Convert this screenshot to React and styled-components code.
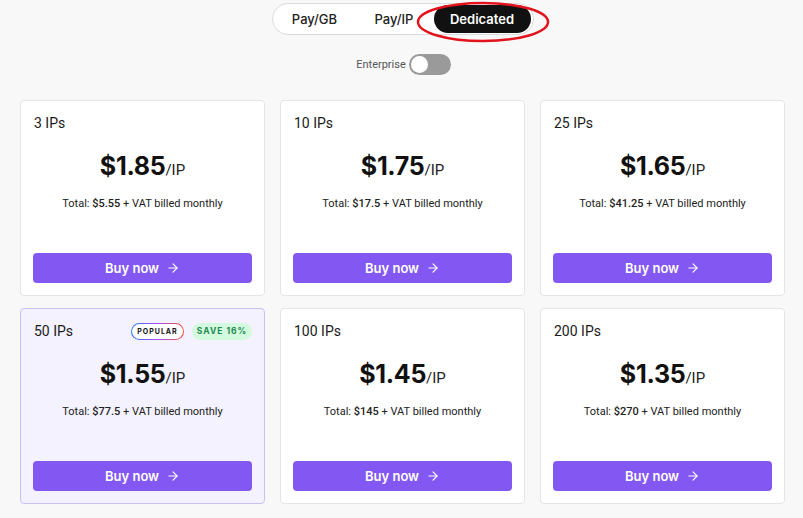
import React from 'react';
import styled, { createGlobalStyle } from 'styled-components';
import { ArrowRight } from 'lucide-react';

const GlobalStyle = createGlobalStyle`
	body {
		margin: 0;
		background: #f8f8f8;
		font-family: Roboto, 'Liberation Sans', sans-serif;
		color: #1a1a1a;
	}
`;

const plans = [
	{ ips: 3, price: '1.85', total: '5.55' },
	{ ips: 10, price: '1.75', total: '17.5' },
	{ ips: 25, price: '1.65', total: '41.25' },
	{ ips: 50, price: '1.55', total: '77.5', popular: true, save: 16 },
	{ ips: 100, price: '1.45', total: '145' },
	{ ips: 200, price: '1.35', total: '270' },
];

const Page = styled.div`
	display: flex;
	flex-direction: column;
	align-items: center;
	padding: 3px 18px 16px 20px;
`;

const TabsWrap = styled.div`
	position: relative;
`;

const Tabs = styled.div`
	display: flex;
	padding: 1px 2px;
	background: #fff;
	border: 1px solid #dcdcdc;
	border-radius: 17px;
`;

const Tab = styled.button`
	width: ${(p) => p.$w}px;
	height: 28px;
	border: 0;
	border-radius: 14px;
	background: ${(p) => (p.$active ? '#111' : 'transparent')};
	color: ${(p) => (p.$active ? '#fff' : '#222')};
	font-family: Inter, 'Liberation Sans', sans-serif;
	font-size: 13px;
	font-weight: ${(p) => (p.$active ? 600 : 500)};
	cursor: pointer;
`;

const Annotation = styled.svg`
	position: absolute;
	left: 143px;
	top: -3px;
	pointer-events: none;
`;

const EnterpriseRow = styled.div`
	display: flex;
	align-items: center;
	gap: 3px;
	margin-top: 19px;
	margin-left: 2px;
	font-size: 11px;
	color: #555;
`;

const Switch = styled.span`
	display: flex;
	align-items: center;
	width: 42px;
	height: 21px;
	padding: 0 2px;
	box-sizing: border-box;
	border-radius: 11px;
	background: #9a9a9a;

	&::after {
		content: '';
		width: 17px;
		height: 17px;
		border-radius: 50%;
		background: #fff;
	}
`;

const Grid = styled.div`
	align-self: stretch;
	display: grid;
	grid-template-columns: repeat(3, 1fr);
	grid-auto-rows: 196px;
	column-gap: 15px;
	row-gap: 12px;
	margin-top: 25px;
`;

const Card = styled.div`
	display: flex;
	flex-direction: column;
	padding: 12px 12px 12px;
	background: ${(p) => (p.$popular ? '#f4f2fe' : '#fff')};
	border: 1px solid ${(p) => (p.$popular ? '#cbc0f5' : '#e5e5e5')};
	border-radius: 4px;
`;

const CardHead = styled.div`
	display: flex;
	align-items: center;
	justify-content: space-between;
	height: 20px;
	padding-left: 1px;
	font-size: 14px;
`;

const Badges = styled.div`
	display: flex;
	gap: 8px;
`;

const Badge = styled.span`
	display: flex;
	align-items: center;
	justify-content: center;
	height: 17px;
	box-sizing: border-box;
	border-radius: 9px;
	font-family: Inter, 'Liberation Sans', sans-serif;
	font-weight: 700;
	letter-spacing: 1px;
`;

const PopularBadge = styled(Badge)`
	width: 53px;
	font-size: 7px;
	color: #111;
	border: 1.5px solid transparent;
	background: linear-gradient(#fff, #fff) padding-box,
		linear-gradient(90deg, #2f7cf6, #a24df0, #f0542f) border-box;
`;

const SaveBadge = styled(Badge)`
	width: 60px;
	font-size: 8.5px;
	color: #1d8a4e;
	background: #d3f9df;
`;

const Price = styled.div`
	display: flex;
	align-items: baseline;
	justify-content: center;
	margin-top: 17px;
	line-height: 32px;

	strong {
		font-family: Inter, 'Liberation Sans', sans-serif;
		font-size: 25px;
		font-weight: 700;
		letter-spacing: -0.3px;
		color: #111;
	}

	span {
		font-size: 15px;
		color: #222;
	}
`;

const Total = styled.div`
	margin-top: 11px;
	text-align: center;
	font-size: 11px;
	color: #222;

	b {
		font-weight: 500;
	}
`;

const BuyButton = styled.button`
	display: flex;
	align-items: center;
	justify-content: center;
	gap: 7px;
	height: 30px;
	margin-top: auto;
	border: 0;
	border-radius: 4px;
	background: #8257f2;
	color: #fff;
	font-family: Inter, 'Liberation Sans', sans-serif;
	font-size: 13px;
	font-weight: 600;
	cursor: pointer;
`;

export default function App() {
	return (
		<>
			<GlobalStyle />
			<Page>
				<TabsWrap>
					<Tabs>
						<Tab $w={80}>Pay/GB</Tab>
						<Tab $w={79}>Pay/IP</Tab>
						<Tab $w={97} $active>
							Dedicated
						</Tab>
					</Tabs>
					<Annotation width="136" height="44" viewBox="0 0 136 44">
						<ellipse cx="68" cy="22" rx="65" ry="19" fill="none" stroke="#e3131d" strokeWidth="2.5" />
					</Annotation>
				</TabsWrap>

				<EnterpriseRow>
					Enterprise
					<Switch />
				</EnterpriseRow>

				<Grid>
					{plans.map((p) => (
						<Card key={p.ips} $popular={p.popular}>
							<CardHead>
								{p.ips} IPs
								{p.popular && (
									<Badges>
										<PopularBadge>POPULAR</PopularBadge>
										<SaveBadge>SAVE {p.save}%</SaveBadge>
									</Badges>
								)}
							</CardHead>
							<Price>
								<strong>${p.price}</strong>
								<span>/IP</span>
							</Price>
							<Total>
								Total: <b>${p.total}</b> + VAT billed monthly
							</Total>
							<BuyButton>
								Buy now <ArrowRight size={14} strokeWidth={2} />
							</BuyButton>
						</Card>
					))}
				</Grid>
			</Page>
		</>
	);
}
